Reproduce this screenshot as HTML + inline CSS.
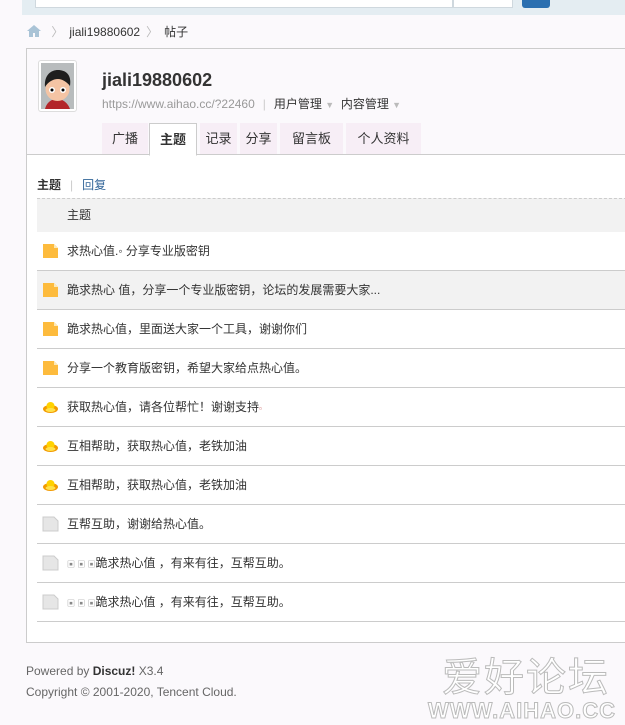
<!DOCTYPE html>
<html><head><meta charset="utf-8"><style>
*{margin:0;padding:0;box-sizing:border-box}
body{width:625px;height:725px;overflow:hidden;background:#fbf9fc;font-family:"Liberation Sans","Noto Sans CJK SC",sans-serif;font-size:12px;color:#333;position:relative}
.a{position:absolute}
.top{left:22px;top:0;width:603px;height:15px;background:#e4edf2}
.search{left:35px;top:0;width:418px;height:8px;background:#fff;border:1px solid #cfd8de;border-top:none}
.sel{left:453px;top:0;width:60px;height:8px;background:#fff;border:1px solid #cfd8de;border-top:none}
.btn{left:522px;top:0;width:28px;height:8px;background:#2b6fb0;border-radius:0 0 3px 3px}
.crumb{top:24px;left:26px;font-size:12px;color:#333;line-height:16px}
.box{left:26px;top:48px;width:610px;height:595px;border:1px solid #ccc;background:#fff}
.hd{left:27px;top:49px;width:600px;height:105px;background:#fbf9fc}
.tabline{left:27px;top:154px;width:600px;height:1px;background:#ccc}
.tab{top:123px;height:31px;background:#f7eef6;line-height:31px;text-align:center;font-size:13px;color:#333}
.tab.on{background:#fff;border:1px solid #ccc;border-bottom:1px solid #fff;height:33px;top:123px}
.row{left:37px;width:590px;height:39px;border-bottom:1px solid #ccc;line-height:38px;font-size:12px;color:#333;padding-left:30px}
.ic{position:absolute;left:5px;top:11px;width:17px;height:16px}
</style></head><body>
<div class="a top"></div><div class="a search"></div><div class="a sel"></div><div class="a btn"></div>
<div class="a crumb"><svg width="16" height="14" style="vertical-align:-2px" viewBox="0 0 16 14"><path d="M8 1L1 7h2v6h4V9h2v4h4V7h2z" fill="#a9c3d6"/></svg>
<span style="color:#bbb;margin:0 6px">〉</span>jiali19880602<span style="color:#bbb;margin:0 6px">〉</span>帖子</div>
<div class="a box"></div>
<div class="a hd"></div>
<div class="a" style="left:38px;top:60px;width:39px;height:52px;border:1px solid #ddd;border-radius:3px;background:#fff;padding:2px">
<svg width="33" height="46" viewBox="0 0 33 46"><rect width="33" height="46" fill="#b8bcbd"/><path d="M4 46c2-8 8-10 12-10s10 2 13 10z" fill="#b3262a"/><ellipse cx="16.5" cy="26" rx="12" ry="12" fill="#f4c4a4"/><path d="M4 24c-1-12 6-17 13-17s14 4 12 16c-3-4-8-7-12-7-5 0-10 3-13 8z" fill="#1e1e1e"/><circle cx="11" cy="27" r="3" fill="#fff"/><circle cx="22" cy="27" r="3" fill="#fff"/><circle cx="11" cy="27" r="1.5" fill="#000"/><circle cx="22" cy="27" r="1.5" fill="#000"/></svg></div>
<div class="a" style="left:102px;top:70px;font-size:18px;font-weight:bold;color:#333">jiali19880602</div>
<div class="a" style="left:102px;top:95px;font-size:12px;color:#999">https://www.aihao.cc/?22460<span style="color:#ccc;margin:0 8px">|</span><span style="color:#333">用户管理 <span style="color:#bbb;font-size:9px">▼</span>&nbsp; 内容管理 <span style="color:#bbb;font-size:9px">▼</span></span></div>
<div class="a tabline"></div>
<div class="a tab" style="left:102px;width:46px">广播</div>
<div class="a tab on" style="left:149px;width:48px;font-weight:bold">主题</div>
<div class="a tab" style="left:200px;width:37px">记录</div>
<div class="a tab" style="left:240px;width:37px">分享</div>
<div class="a tab" style="left:280px;width:63px">留言板</div>
<div class="a tab" style="left:346px;width:75px">个人资料</div>
<div class="a" style="left:37px;top:176px;font-size:12px"><b>主题</b><span style="color:#ccc;margin:0 9px">|</span><span style="color:#336699">回复</span></div>
<div class="a" style="left:37px;top:198px;width:590px;height:34px;background:#f2f2f2;border-top:1px dashed #ccc;line-height:33px;padding-left:30px">主题</div>
<div class="a row" style="top:232px"><svg class="ic" viewBox="0 0 17 16"><path d="M1 1h11l4 4v10H1z" fill="#fdbb3d"/><path d="M12 1v4h4z" fill="#fde9b8"/></svg>求热心值.◦ 分享专业版密钥</div>
<div class="a row" style="top:271px;background:#f2f2f2"><svg class="ic" viewBox="0 0 17 16"><path d="M1 1h11l4 4v10H1z" fill="#fdbb3d"/><path d="M12 1v4h4z" fill="#fde9b8"/></svg>跪求热心 值，分享一个专业版密钥，论坛的发展需要大家...</div>
<div class="a row" style="top:310px"><svg class="ic" viewBox="0 0 17 16"><path d="M1 1h11l4 4v10H1z" fill="#fdbb3d"/><path d="M12 1v4h4z" fill="#fde9b8"/></svg>跪求热心值，里面送大家一个工具，谢谢你们</div>
<div class="a row" style="top:349px"><svg class="ic" viewBox="0 0 17 16"><path d="M1 1h11l4 4v10H1z" fill="#fdbb3d"/><path d="M12 1v4h4z" fill="#fde9b8"/></svg>分享一个教育版密钥，希望大家给点热心值。</div>
<div class="a row" style="top:388px"><svg class="ic" viewBox="0 0 17 16"><ellipse cx="8.5" cy="10" rx="7.5" ry="4" fill="#f29a00"/><ellipse cx="8.5" cy="7" rx="4" ry="4" fill="#ffd200"/><ellipse cx="8.5" cy="11" rx="5" ry="2" fill="#ffe14a"/></svg>获取热心值，请各位帮忙！谢谢支持<span style="font-size:8px;color:#c66">▫</span></div>
<div class="a row" style="top:427px"><svg class="ic" viewBox="0 0 17 16"><ellipse cx="8.5" cy="10" rx="7.5" ry="4" fill="#f29a00"/><ellipse cx="8.5" cy="7" rx="4" ry="4" fill="#ffd200"/><ellipse cx="8.5" cy="11" rx="5" ry="2" fill="#ffe14a"/></svg>互相帮助，获取热心值，老铁加油</div>
<div class="a row" style="top:466px"><svg class="ic" viewBox="0 0 17 16"><ellipse cx="8.5" cy="10" rx="7.5" ry="4" fill="#f29a00"/><ellipse cx="8.5" cy="7" rx="4" ry="4" fill="#ffd200"/><ellipse cx="8.5" cy="11" rx="5" ry="2" fill="#ffe14a"/></svg>互相帮助，获取热心值，老铁加油</div>
<div class="a row" style="top:505px"><svg class="ic" viewBox="0 0 17 16"><path d="M1 1h11l4 4v10H1z" fill="#e6e6e6" stroke="#ccc"/></svg>互帮互助，谢谢给热心值。</div>
<div class="a row" style="top:544px"><svg class="ic" viewBox="0 0 17 16"><path d="M1 1h11l4 4v10H1z" fill="#e6e6e6" stroke="#ccc"/></svg><span style="font-size:8px;color:#888">▣ ▣ ▣</span>跪求热心值 ，有来有往，互帮互助。</div>
<div class="a row" style="top:583px"><svg class="ic" viewBox="0 0 17 16"><path d="M1 1h11l4 4v10H1z" fill="#e6e6e6" stroke="#ccc"/></svg><span style="font-size:8px;color:#888">▣ ▣ ▣</span>跪求热心值 ，有来有往，互帮互助。</div>
<div class="a" style="left:26px;top:661px;color:#666;font-size:12px;line-height:21px">Powered by <b style="color:#333">Discuz!</b> X3.4<br>Copyright © 2001-2020, Tencent Cloud.</div>
<div class="a" style="left:442px;top:650px;font-size:40px;color:#fff;-webkit-text-stroke:1px #bbb;letter-spacing:2px;font-family:'Noto Sans CJK SC',sans-serif;line-height:48px">爱好论坛</div>
<div class="a" style="left:428px;top:698px;font-size:22px;font-weight:bold;color:#fff;-webkit-text-stroke:1px #bbb;letter-spacing:1px;line-height:26px">WWW.AIHAO.CC</div>
</body></html>
